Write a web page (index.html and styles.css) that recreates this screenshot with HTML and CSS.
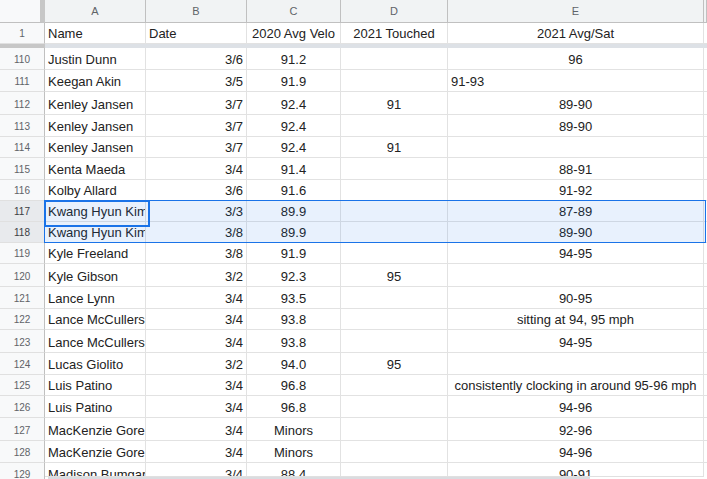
FILE: index.html
```html
<!DOCTYPE html>
<html>
<head>
<meta charset="utf-8">
<link rel="stylesheet" href="styles.css">
</head>
<body>
<div class="sheet">
  <div class="row colhead">
    <div class="corner"></div>
    <div class="ch">A</div><div class="ch">B</div><div class="ch">C</div><div class="ch">D</div><div class="ch">E</div><div class="ch"></div>
  </div>
  <div class="row h21 frozen">
    <div class="rh">1</div><div class="c l">Name</div><div class="c l">Date</div><div class="c m">2020 Avg Velo</div><div class="c m">2021 Touched</div><div class="c m">2021 Avg/Sat</div><div class="c"></div>
  </div>
  <div class="freeze"><div class="freeze-hd"></div><div class="freeze-bd"></div></div>

  <div class="row h22"><div class="rh">110</div><div class="c l">Justin Dunn</div><div class="c r">3/6</div><div class="c m">91.2</div><div class="c m"></div><div class="c m">96</div><div class="c"></div></div>
  <div class="row h22"><div class="rh">111</div><div class="c l">Keegan Akin</div><div class="c r">3/5</div><div class="c m">91.9</div><div class="c m"></div><div class="c l">91-93</div><div class="c"></div></div>
  <div class="row h23"><div class="rh">112</div><div class="c l">Kenley Jansen</div><div class="c r">3/7</div><div class="c m">92.4</div><div class="c m">91</div><div class="c m">89-90</div><div class="c"></div></div>
  <div class="row h22"><div class="rh">113</div><div class="c l">Kenley Jansen</div><div class="c r">3/7</div><div class="c m">92.4</div><div class="c m"></div><div class="c m">89-90</div><div class="c"></div></div>
  <div class="row h21"><div class="rh">114</div><div class="c l">Kenley Jansen</div><div class="c r">3/7</div><div class="c m">92.4</div><div class="c m">91</div><div class="c m"></div><div class="c"></div></div>
  <div class="row h22"><div class="rh">115</div><div class="c l">Kenta Maeda</div><div class="c r">3/4</div><div class="c m">91.4</div><div class="c m"></div><div class="c m">88-91</div><div class="c"></div></div>
  <div class="row h21"><div class="rh">116</div><div class="c l">Kolby Allard</div><div class="c r">3/6</div><div class="c m">91.6</div><div class="c m"></div><div class="c m">91-92</div><div class="c"></div></div>
  <div class="range">
    <div class="row h21 sel"><div class="rh">117</div><div class="c l">Kwang Hyun Kim</div><div class="c r">3/3</div><div class="c m">89.9</div><div class="c m"></div><div class="c m">87-89</div><div class="c"></div></div>
    <div class="row h21 sel"><div class="rh">118</div><div class="c l">Kwang Hyun Kim</div><div class="c r">3/8</div><div class="c m">89.9</div><div class="c m"></div><div class="c m">89-90</div><div class="c"></div></div>
  </div>
  <div class="row h21"><div class="rh">119</div><div class="c l">Kyle Freeland</div><div class="c r">3/8</div><div class="c m">91.9</div><div class="c m"></div><div class="c m">94-95</div><div class="c"></div></div>
  <div class="row h23"><div class="rh">120</div><div class="c l">Kyle Gibson</div><div class="c r">3/2</div><div class="c m">92.3</div><div class="c m">95</div><div class="c m"></div><div class="c"></div></div>
  <div class="row h22"><div class="rh">121</div><div class="c l">Lance Lynn</div><div class="c r">3/4</div><div class="c m">93.5</div><div class="c m"></div><div class="c m">90-95</div><div class="c"></div></div>
  <div class="row h21"><div class="rh">122</div><div class="c l">Lance McCullers</div><div class="c r">3/4</div><div class="c m">93.8</div><div class="c m"></div><div class="c m">sitting at 94, 95 mph</div><div class="c"></div></div>
  <div class="row h23"><div class="rh">123</div><div class="c l">Lance McCullers</div><div class="c r">3/4</div><div class="c m">93.8</div><div class="c m"></div><div class="c m">94-95</div><div class="c"></div></div>
  <div class="row h22"><div class="rh">124</div><div class="c l">Lucas Giolito</div><div class="c r">3/2</div><div class="c m">94.0</div><div class="c m">95</div><div class="c m"></div><div class="c"></div></div>
  <div class="row h21"><div class="rh">125</div><div class="c l">Luis Patino</div><div class="c r">3/4</div><div class="c m">96.8</div><div class="c m"></div><div class="c m">consistently clocking in around 95-96 mph</div><div class="c"></div></div>
  <div class="row h22"><div class="rh">126</div><div class="c l">Luis Patino</div><div class="c r">3/4</div><div class="c m">96.8</div><div class="c m"></div><div class="c m">94-96</div><div class="c"></div></div>
  <div class="row h23"><div class="rh">127</div><div class="c l">MacKenzie Gore</div><div class="c r">3/4</div><div class="c m">Minors</div><div class="c m"></div><div class="c m">92-96</div><div class="c"></div></div>
  <div class="row h22"><div class="rh">128</div><div class="c l">MacKenzie Gore</div><div class="c r">3/4</div><div class="c m">Minors</div><div class="c m"></div><div class="c m">94-96</div><div class="c"></div></div>
  <div class="row h22"><div class="rh">129</div><div class="c l">Madison Bumgarner</div><div class="c r">3/4</div><div class="c m">88.4</div><div class="c m"></div><div class="c m">90-91</div><div class="c"></div></div>
</div>
<div class="hscroll"><div class="thumb"></div></div>
</body>
</html>
```

FILE: styles.css
```css
* { box-sizing: border-box; }
html, body { margin: 0; padding: 0; }
body {
  width: 707px;
  height: 479px;
  overflow: hidden;
  position: relative;
  background: #fff;
  font-family: "Liberation Sans", Arial, sans-serif;
}
.sheet { width: 707px; }
.row {
  display: grid;
  grid-template-columns: 45px 101px 101px 94px 107px 256px 1fr;
}
.h21 { height: 21px; }
.h22 { height: 22px; }
.h23 { height: 23px; }

.colhead { height: 23px; }
.corner {
  background: #f8f9fa;
  border-right: 5px solid #c7c7c7;
  border-bottom: 1px solid #c0c0c0;
}
.ch {
  background: #f1f3f4;
  border-right: 1px solid #c0c0c0;
  border-bottom: 1px solid #c0c0c0;
  display: flex;
  align-items: center;
  justify-content: center;
  font-size: 11px;
  color: #5f6368;
}

.rh {
  background: #f8f9fa;
  border-right: 1px solid #c0c0c0;
  border-bottom: 1px solid #e0e0e0;
  font-size: 10px;
  line-height: 16px;
  color: #5f6368;
  text-align: center;
  display: flex;
  flex-direction: column;
  justify-content: flex-end;
  padding-bottom: 1px;
}
.c {
  border-right: 1px solid #e2e2e2;
  border-bottom: 1px solid #e2e2e2;
  overflow: hidden;
  white-space: nowrap;
  font-size: 13px;
  line-height: 16px;
  color: #222;
  padding: 0 3px 1px 3px;
  display: flex;
  flex-direction: column;
  justify-content: flex-end;
}
.l { text-align: left; }
.r { text-align: right; }
.m { text-align: center; }

.freeze {
  display: grid;
  grid-template-columns: 45px 1fr;
  height: 4px;
}
.freeze-hd { background: #c7c7c7; }
.freeze-bd { background: #dde1e6; }

.sel .rh { background: #e8eaed; color: #3c4043; }

.range { position: relative; }
.range::before {
  content: "";
  position: absolute;
  left: 44px;
  top: -1px;
  width: 660px;
  bottom: 0;
  background: rgba(26, 115, 232, 0.1);
  border: 1px solid #1a73e8;
  pointer-events: none;
}
.range::after {
  content: "";
  position: absolute;
  left: 44px;
  top: -1px;
  width: 102px;
  height: 23px;
  border: 2px solid #1a73e8;
  pointer-events: none;
}

.hscroll {
  position: absolute;
  left: 45px;
  right: 3px;
  bottom: 0;
  height: 3px;
  background: #fff;
  border-top: 1px solid #e0e0e0;
}
.hscroll .thumb {
  position: absolute;
  left: 3px;
  width: 542px;
  top: 0;
  bottom: 0;
  background: #dadce0;
}
```
